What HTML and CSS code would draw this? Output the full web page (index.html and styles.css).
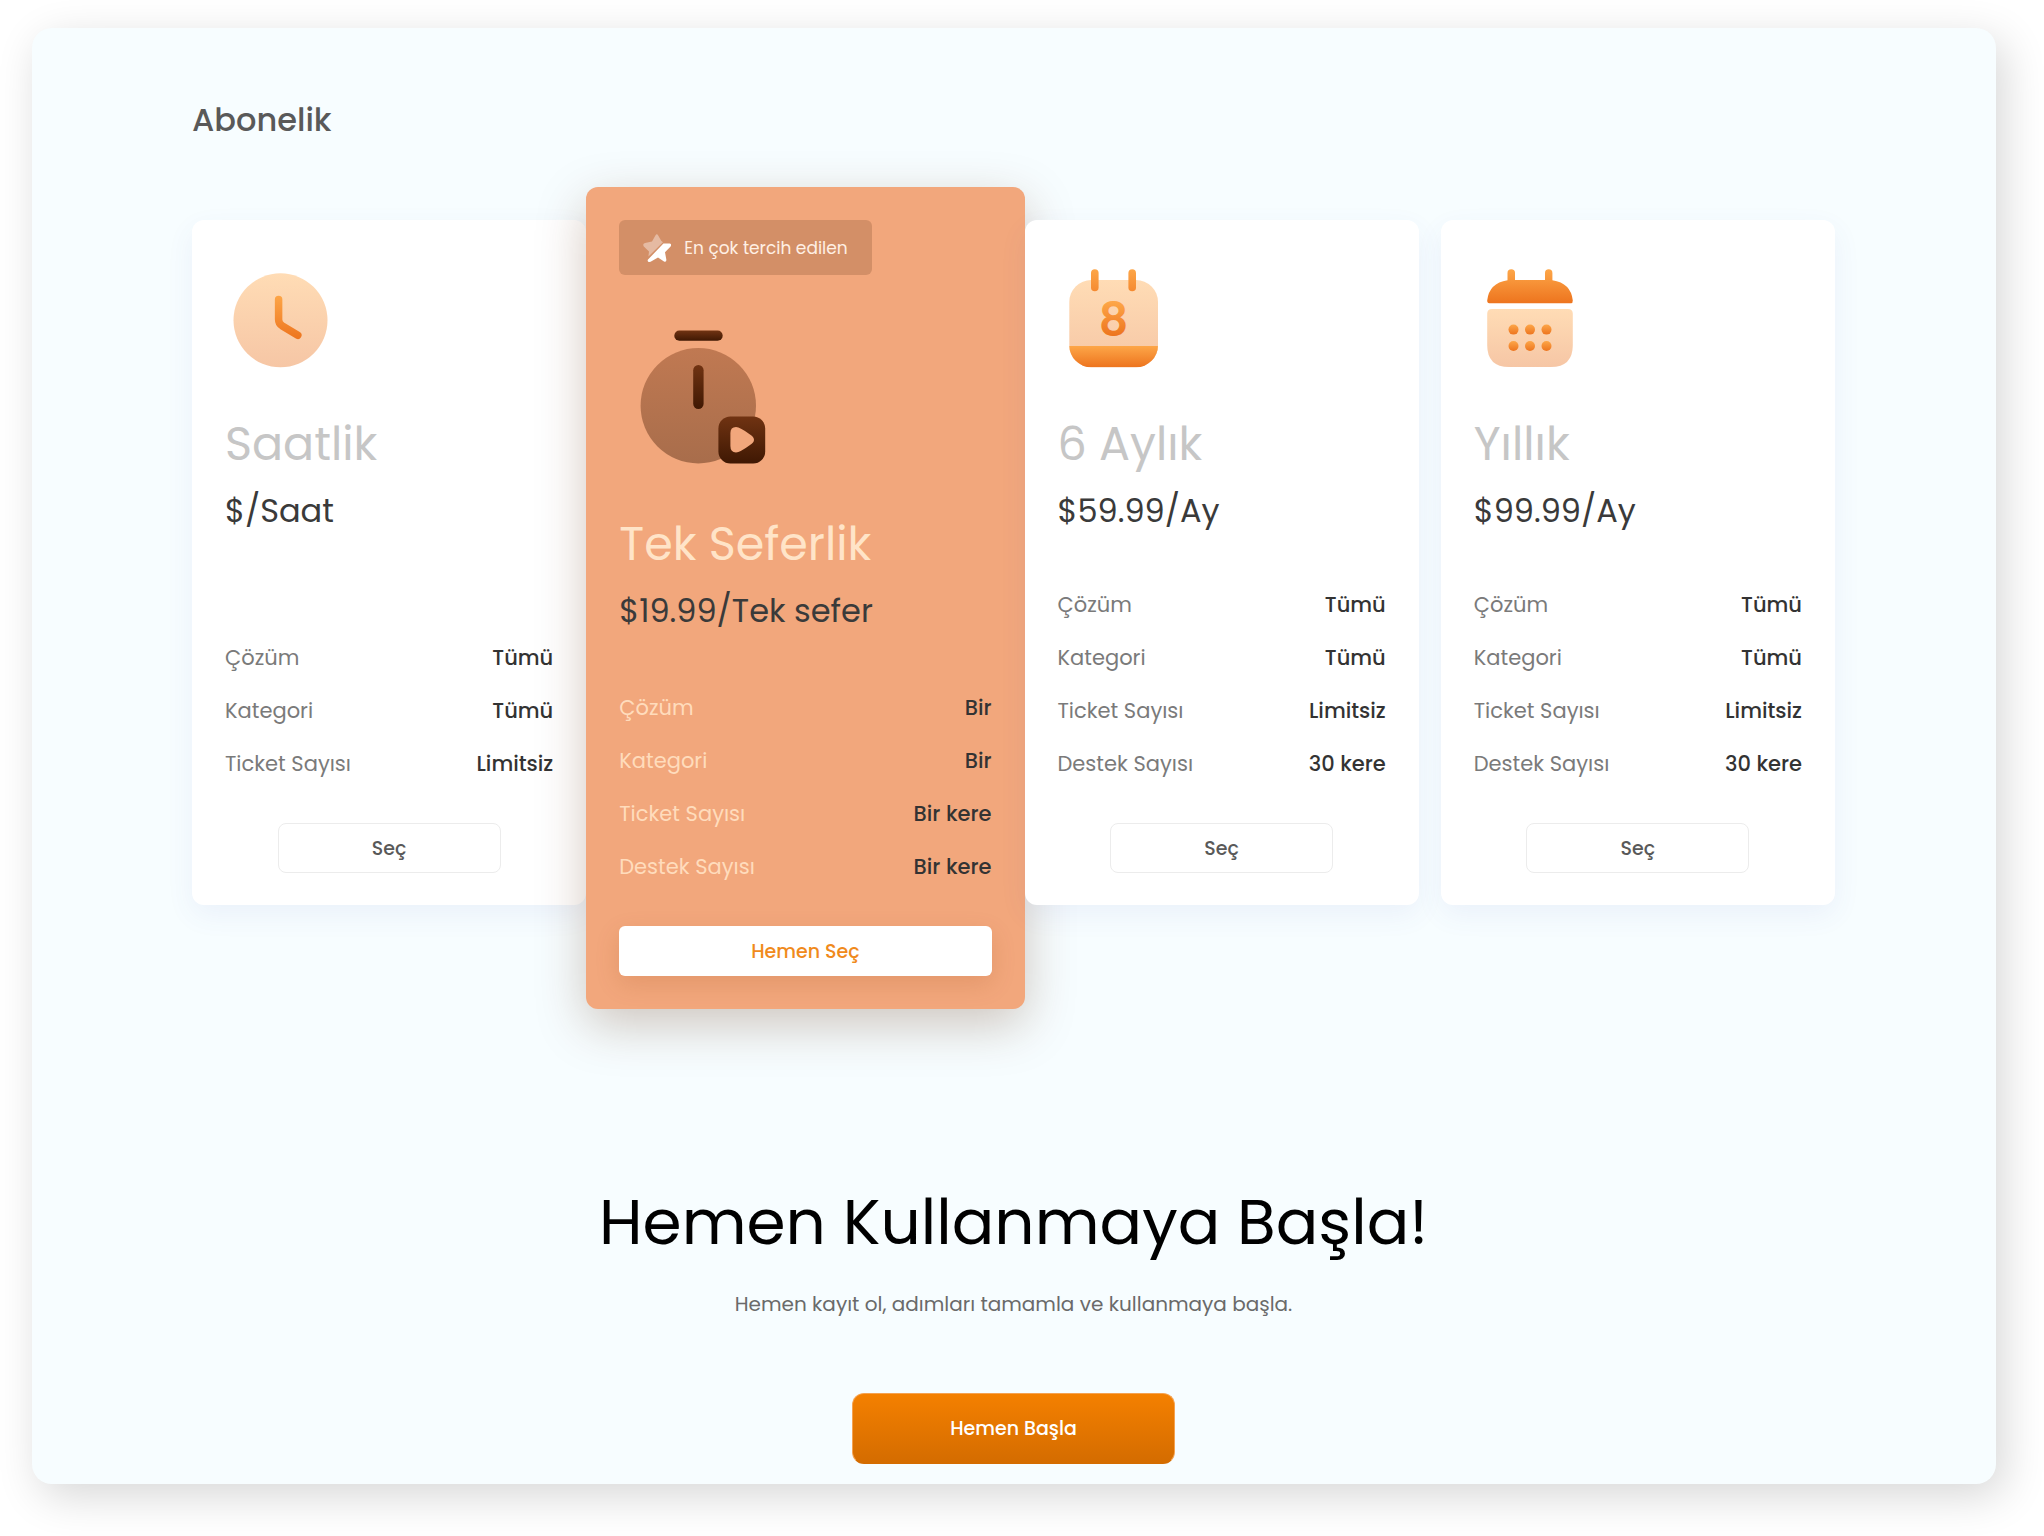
FILE: index.html
```html
<!DOCTYPE html>
<html lang="tr">
<head>
<meta charset="utf-8">
<meta name="viewport" content="width=device-width, initial-scale=1">
<title>Abonelik</title>
<link rel="stylesheet" href="styles.css">
</head>
<body>
<main class="panel">
  <h1 class="page-title">Abonelik</h1>

  <section class="plans" aria-label="Abonelik planları">
    <article class="plan">
      <svg class="plan-icon" viewBox="0 0 112 112" aria-hidden="true">
        <defs>
          <linearGradient id="soft" x1="0" y1="0" x2="0" y2="1"><stop offset="0" stop-color="#ffdcb5"/><stop offset="1" stop-color="#f6c6a5"/></linearGradient>
          <linearGradient id="hands" gradientUnits="userSpaceOnUse" x1="0" y1="31" x2="0" y2="76"><stop offset="0" stop-color="#fda648"/><stop offset="1" stop-color="#ed741e"/></linearGradient>
        </defs>
        <circle cx="55.500" cy="56.300" r="47" fill="url(#soft)"/>
        <path d="M53.600 35.500V55.500Q53.600 59.500 57 61.700L72.800 71.300" fill="none" stroke="url(#hands)" stroke-width="7.500" stroke-linecap="round"/>
      </svg>
      <h2 class="plan-name">Saatlik</h2>
      <p class="plan-price">$/Saat</p>
      <dl class="features">
        <div class="feature"><dt>Çözüm</dt><dd>Tümü</dd></div>
        <div class="feature"><dt>Kategori</dt><dd>Tümü</dd></div>
        <div class="feature"><dt>Ticket Sayısı</dt><dd>Limitsiz</dd></div>
      </dl>
      <button class="select-button" type="button">Seç</button>
    </article>

    <article class="plan plan-featured">
      <p class="badge">
        <svg class="badge-icon" viewBox="0 0 28 28" aria-hidden="true">
          <path d="M12.400 1.400Q13.800 -.8 15.200 1.400L18.200 6.800L20 8.200L5.400 22.600L6 17.600L.8 12.400Q-.8 9.800 2 9L9 7.600Z" fill="#e5baa2"/>
          <path d="M20.400 9.600L26.600 9.400Q29.200 10 27.600 12.600L22 18.200L23.400 26Q23.200 28.400 21 27.400L15 23.400L7.600 27.800Q4 28.400 4.800 25.800Z" fill="#fff"/>
        </svg>
        En çok tercih edilen
      </p>
      <svg class="plan-icon" viewBox="0 0 150 150" aria-hidden="true">
        <defs>
          <linearGradient id="brown" x1="0" y1="0" x2="0" y2="1"><stop offset="0" stop-color="#703312"/><stop offset="1" stop-color="#3f1803"/></linearGradient>
          <linearGradient id="brown-soft" x1="0" y1="0" x2="0" y2="1"><stop offset="0" stop-color="#c07952"/><stop offset="1" stop-color="#a86d4b"/></linearGradient>
        </defs>
        <circle cx="79.300" cy="79.700" r="57.700" fill="url(#brown-soft)"/>
        <rect x="55.300" y="4.600" width="48.400" height="10.200" rx="5.100" fill="url(#brown)"/>
        <rect x="74.200" y="39" width="10.400" height="44" rx="5.200" fill="url(#brown)"/>
        <rect x="99.400" y="90.600" width="46.800" height="46.800" rx="12" fill="url(#brown)"/>
        <path d="M111.400 107Q111.400 101 117 101Q121 101 131 108.500Q135 111 135 113.800Q135 116.600 131 119Q121 126.400 117 126.400Q111.400 126.400 111.400 120Z" fill="#f2a77c"/>
      </svg>
      <h2 class="plan-name">Tek Seferlik</h2>
      <p class="plan-price">$19.99/Tek sefer</p>
      <dl class="features">
        <div class="feature"><dt>Çözüm</dt><dd>Bir</dd></div>
        <div class="feature"><dt>Kategori</dt><dd>Bir</dd></div>
        <div class="feature"><dt>Ticket Sayısı</dt><dd>Bir kere</dd></div>
        <div class="feature"><dt>Destek Sayısı</dt><dd>Bir kere</dd></div>
      </dl>
      <button class="select-button" type="button">Hemen Seç</button>
    </article>

    <article class="plan">
      <svg class="plan-icon" viewBox="0 0 112 112" aria-hidden="true">
        <defs>
          <linearGradient id="orange" x1="0" y1="0" x2="0" y2="1"><stop offset="0" stop-color="#fda648"/><stop offset="1" stop-color="#ed741e"/></linearGradient>
          <linearGradient id="ring" x1="0" y1="0" x2="0" y2="1"><stop offset="0" stop-color="#fda648"/><stop offset="1" stop-color="#f58a30"/></linearGradient>
          <linearGradient id="digit" gradientUnits="userSpaceOnUse" x1="0" y1="38" x2="0" y2="72"><stop offset="0" stop-color="#fda648"/><stop offset="1" stop-color="#ed741e"/></linearGradient>
          <clipPath id="body-clip"><rect x="11.300" y="16" width="88.700" height="87.300" rx="22"/></clipPath>
        </defs>
        <rect x="11.300" y="16" width="88.700" height="87.300" rx="22" fill="url(#soft)"/>
        <rect x="11" y="82" width="90" height="21.300" fill="url(#orange)" clip-path="url(#body-clip)"/>
        <rect x="33" y="5.300" width="7.600" height="22" rx="3.800" fill="url(#ring)"/>
        <rect x="70.400" y="5.300" width="7.600" height="22" rx="3.800" fill="url(#ring)"/>
        <text class="calendar-day" x="55.600" y="71.500" text-anchor="middle" fill="url(#digit)">8</text>
      </svg>
      <h2 class="plan-name">6 Aylık</h2>
      <p class="plan-price">$59.99/Ay</p>
      <dl class="features">
        <div class="feature"><dt>Çözüm</dt><dd>Tümü</dd></div>
        <div class="feature"><dt>Kategori</dt><dd>Tümü</dd></div>
        <div class="feature"><dt>Ticket Sayısı</dt><dd>Limitsiz</dd></div>
        <div class="feature"><dt>Destek Sayısı</dt><dd>30 kere</dd></div>
      </dl>
      <button class="select-button" type="button">Seç</button>
    </article>

    <article class="plan">
      <svg class="plan-icon" viewBox="0 0 112 112" aria-hidden="true">
        <path d="M33.500 9Q33.500 5.300 37.300 5.300T41 9V16H71V9Q71 5.300 74.700 5.300T78.400 9V16.200Q97 19 98.800 36.500Q98.800 39.300 97 39.300H15.300Q13.200 39.300 13.200 36.500Q15 19 33.500 16.200Z" fill="url(#orange)"/>
        <path d="M18 45H94Q98.800 45 98.800 50V81Q98.800 103 76.800 103H35.200Q13.200 103 13.200 81V50Q13.200 45 18 45Z" fill="url(#soft)"/>
        <g fill="url(#orange)">
          <circle cx="39.500" cy="65.600" r="5"/><circle cx="56" cy="65.600" r="5"/><circle cx="72.500" cy="65.600" r="5"/>
          <circle cx="39.500" cy="82" r="5"/><circle cx="56" cy="82" r="5"/><circle cx="72.500" cy="82" r="5"/>
        </g>
      </svg>
      <h2 class="plan-name">Yıllık</h2>
      <p class="plan-price">$99.99/Ay</p>
      <dl class="features">
        <div class="feature"><dt>Çözüm</dt><dd>Tümü</dd></div>
        <div class="feature"><dt>Kategori</dt><dd>Tümü</dd></div>
        <div class="feature"><dt>Ticket Sayısı</dt><dd>Limitsiz</dd></div>
        <div class="feature"><dt>Destek Sayısı</dt><dd>30 kere</dd></div>
      </dl>
      <button class="select-button" type="button">Seç</button>
    </article>
  </section>

  <section class="cta">
    <h2 class="cta-title">Hemen Kullanmaya Başla!</h2>
    <p class="cta-text">Hemen kayıt ol, adımları tamamla ve kullanmaya başla.</p>
    <button class="cta-button" type="button">Hemen Başla</button>
  </section>
</main>
</body>
</html>
```
FILE: styles.css
```css
* {
  box-sizing: border-box;
}

body {
  margin: 0;
  padding: 28px 48px 52px 32px;
  background: #fff;
  color: #333;
  font-family: Poppins, Inter, "Liberation Sans", sans-serif;
}

h1,
h2,
p,
dl,
dd {
  margin: 0;
}

button {
  font-family: inherit;
  cursor: pointer;
}

.panel {
  padding: 68px 161px 20px 160px;
  border-radius: 20px;
  background: #f7fdff;
  box-shadow: 8px 12px 44px rgba(0, 0, 0, 0.16);
}

.page-title {
  margin-bottom: 76px;
  color: #595959;
  font-size: 32px;
  font-weight: 500;
  line-height: 48px;
}

/* Plans */

.plans {
  display: grid;
  grid-template-columns: repeat(4, minmax(0, 1fr));
  gap: 22px;
}

.plan {
  display: flex;
  flex-direction: column;
  padding: 44px 33px 32px;
  border-radius: 12px;
  background: #fff;
  box-shadow: 0 10px 28px rgba(70, 80, 180, 0.07);
}

.plan-icon {
  display: block;
  width: 112px;
  height: 112px;
}

.calendar-day {
  font-size: 46px;
  font-weight: 600;
}

.plan-name {
  margin-top: 40px;
  color: #c6c6c6;
  font-size: 46px;
  font-weight: 400;
  line-height: 56px;
}

.plan-price {
  margin-top: 19px;
  color: #3a3a3a;
  font-size: 32px;
  line-height: 40px;
}

.features {
  display: flex;
  flex-direction: column;
  gap: 21px;
  margin-top: auto;
  padding-top: 58px;
  font-size: 21px;
  line-height: 32px;
}

.feature {
  display: flex;
  justify-content: space-between;
}

.feature dt {
  color: #7a7a7a;
}

.feature dd {
  font-weight: 500;
}

.select-button {
  align-self: center;
  width: 223px;
  height: 50px;
  margin-top: 43px;
  border: 1px solid #ececec;
  border-radius: 8px;
  background: transparent;
  color: #595959;
  font-size: 19px;
  font-weight: 500;
}

/* The recommended plan stands out past its grid cell on every side */

.plan-featured {
  margin: -33px -22px -104px;
  padding: 33px;
  background: #f2a77c;
  box-shadow: 0 16px 50px rgba(90, 40, 0, 0.26);
}

.plan-featured .plan-icon {
  width: 150px;
  height: 150px;
  margin-top: 51px;
}

.plan-featured .plan-name {
  color: #ffe4c8;
}

.plan-featured .feature dt {
  color: #ffdcbc;
}

.plan-featured .select-button {
  width: 100%;
  border: 0;
  border-radius: 6px;
  background: #fff;
  box-shadow: 0 8px 24px rgba(150, 70, 20, 0.16);
  color: #f08a1c;
}

.badge {
  display: flex;
  align-items: center;
  align-self: flex-start;
  gap: 13px;
  height: 55px;
  padding: 0 24px;
  border-radius: 6px;
  background: #d38f67;
  color: #fff0e4;
  font-size: 17px;
}

.badge-icon {
  width: 28px;
  height: 28px;
}

/* Call to action */

.cta {
  display: flex;
  flex-direction: column;
  align-items: center;
  margin-top: 277px;
  text-align: center;
}

.cta-title {
  color: #000;
  font-size: 63px;
  font-weight: 400;
  line-height: 80px;
}

.cta-text {
  margin-top: 26px;
  color: #6a6a6a;
  font-size: 20px;
  line-height: 32px;
}

.cta-button {
  width: 323px;
  height: 71px;
  margin-top: 73px;
  border: 1px solid #f5a250;
  border-bottom-color: #d46c00;
  border-radius: 12px;
  background: linear-gradient(#f48000, #d46c00);
  color: #fff;
  font-size: 19px;
  font-weight: 500;
}
```
